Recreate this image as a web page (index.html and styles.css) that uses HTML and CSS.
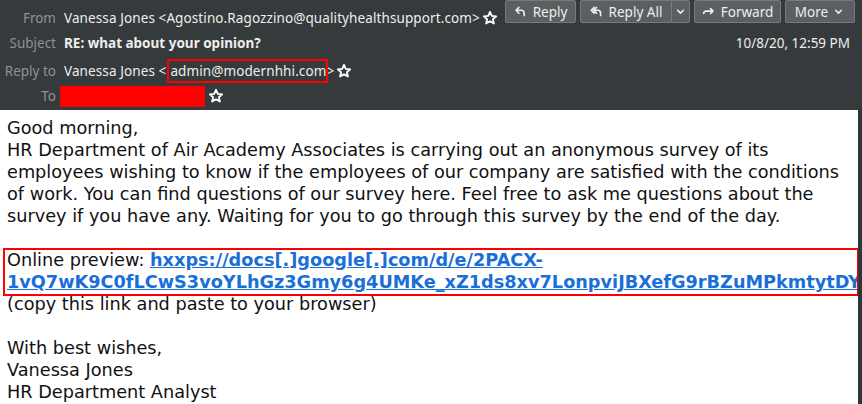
FILE: index.html
```html
<!DOCTYPE html>
<html lang="en">
<head>
    <meta charset="UTF-8">
    <title>RE: what about your opinion?</title>
    <link rel="stylesheet" href="styles.css">
</head>
<body>
    <div class="header">
        <div class="row from-row">
            <span class="label">From</span>
            <span class="value">Vanessa Jones &lt;Agostino.Ragozzino@qualityhealthsupport.com&gt;</span>
            <svg class="star" viewBox="0 0 16 16"><path d="M8 1.8l1.8 4.1 4.4.4-3.3 2.9 1 4.3L8 11.2l-3.9 2.3 1-4.3-3.3-2.9 4.4-.4z"/></svg>
            <div class="buttons">
                <button class="btn w-reply"><svg viewBox="0 0 16 16"><path d="M6 3L2.5 6.5 6 10M3 6.5h6a3.5 3.5 0 0 1 3.5 3.5v3"/></svg>Reply</button>
                <div class="split">
                    <button class="btn w-all"><svg viewBox="0 0 16 16"><path d="M5 3L1.5 6.5 5 10M8 3L4.5 6.5 8 10M5.5 6.5h4a3.5 3.5 0 0 1 3.5 3.5v3"/></svg>Reply All</button>
                    <button class="btn arrow"><svg viewBox="0 0 16 16"><path d="M4.5 6.5L8 10l3.5-3.5"/></svg></button>
                </div>
                <button class="btn w-fwd"><svg viewBox="0 0 16 16"><path d="M2 10.5a3 3 0 0 1 3-3h8.5M10.5 4.5l3 3-3 3"/></svg>Forward</button>
                <button class="btn w-more">More<svg viewBox="0 0 16 16"><path d="M4.5 6.5L8 10l3.5-3.5"/></svg></button>
            </div>
        </div>
        <div class="row subject-row">
            <span class="label">Subject</span>
            <span class="value subject">RE: what about your opinion?</span>
            <span class="date">10/8/20, 12:59 PM</span>
        </div>
        <div class="row reply-row">
            <span class="label">Reply to</span>
            <span class="value">Vanessa Jones &lt;<span class="boxed">admin@modernhhi.com</span>&gt;</span>
            <svg class="star" viewBox="0 0 16 16"><path d="M8 1.8l1.8 4.1 4.4.4-3.3 2.9 1 4.3L8 11.2l-3.9 2.3 1-4.3-3.3-2.9 4.4-.4z"/></svg>
        </div>
        <div class="row to-row">
            <span class="label">To</span>
            <span class="redacted"></span>
            <svg class="star" viewBox="0 0 16 16"><path d="M8 1.8l1.8 4.1 4.4.4-3.3 2.9 1 4.3L8 11.2l-3.9 2.3 1-4.3-3.3-2.9 4.4-.4z"/></svg>
        </div>
    </div>

    <div class="message">
        <p>Good morning,<br>
        HR Department of Air Academy Associates is carrying out an anonymous survey of its<br>
        employees wishing to know if the employees of our company are satisfied with the conditions<br>
        of work. You can find questions of our survey here. Feel free to ask me questions about the<br>
        survey if you have any. Waiting for you to go through this survey by the end of the day.</p>

        <div class="link-box">Online preview: <a href="#">hxxps://docs[.]google[.]com/d/e/2PACX-<br>1vQ7wK9C0fLCwS3voYLhGz3Gmy6g4UMKe_xZ1ds8xv7LonpviJBXefG9rBZuMPkmtytDYe</a></div>
        <p>(copy this link and paste to your browser)</p>

        <p class="gap">With best wishes,<br>
        Vanessa Jones<br>
        HR Department Analyst</p>
    </div>
</body>
</html>
```

FILE: styles.css
```css
html, body {
    margin: 0;
    height: 100%;
    overflow: hidden;
}

body {
    background: #2f3436;
    font-family: "Noto Sans", "Open Sans", sans-serif;
}

.header {
    height: 110px;
    background: #353a3c;
    color: #eeeeec;
    font-size: 13.5px;
    box-sizing: border-box;
    padding-top: 5px;
}

.row {
    display: flex;
    align-items: center;
}

.from-row {
    height: 26px;
}

.subject-row {
    height: 24px;
}

.reply-row {
    height: 32px;
}

.to-row {
    height: 18px;
}

.label {
    width: 56px;
    text-align: right;
    color: #8f9293;
    margin-right: 8px;
    flex-shrink: 0;
}

.value {
    white-space: nowrap;
    letter-spacing: 0.1px;
}

.subject {
    font-weight: bold;
    letter-spacing: 0;
}

.boxed {
    outline: 2px solid #ff0000;
    margin-left: 3px;
    padding: 1px 0 1px 1px;
}

.star {
    width: 16px;
    height: 16px;
    margin-left: 2px;
    fill: none;
    stroke: #ffffff;
    stroke-width: 1.8;
    stroke-linejoin: round;
}

.redacted {
    display: inline-block;
    width: 145px;
    height: 21px;
    background: #ff0000;
    margin-left: -4px;
    margin-right: 1px;
}

.buttons {
    display: flex;
    gap: 4px;
    margin-left: auto;
    margin-right: 7px;
    align-self: flex-start;
    margin-top: -5px;
}

.split {
    display: flex;
}

.btn {
    display: flex;
    align-items: center;
    justify-content: center;
    gap: 6px;
    height: 23px;
    padding: 0;
    background: #5a5f61;
    border: 1px solid #767b7d;
    border-radius: 2px;
    color: #eeeeec;
    font-family: inherit;
    font-size: 13.5px;
    white-space: nowrap;
}

.btn svg {
    width: 13px;
    height: 13px;
    fill: none;
    stroke: #eeeeec;
    stroke-width: 2;
    stroke-linecap: round;
    stroke-linejoin: round;
}

.w-reply {
    width: 71px;
}

.w-all {
    width: 92px;
    border-radius: 2px 0 0 2px;
}

.arrow {
    width: 18px;
    border-left-width: 0;
    border-radius: 0 2px 2px 0;
}

.w-fwd {
    width: 87px;
}

.w-more {
    width: 70px;
    gap: 4px;
}

.date {
    margin-left: auto;
    margin-right: 12px;
}

.message {
    background: #ffffff;
    margin-right: 4px;
    height: 294px;
    padding: 7px 0 0 7px;
    box-sizing: border-box;
    font-family: "DejaVu Sans", sans-serif;
    font-size: 17.7px;
    line-height: 22px;
    color: #111111;
    overflow: hidden;
}

.message p {
    margin: 0;
}

.link-box {
    margin: 22px 0 -2px -3px;
    padding: 0 0 2px 3px;
    outline: 2px solid #ff0000;
    outline-offset: -1px;
    white-space: nowrap;
}

.link-box a {
    color: #1a6fd6;
    font-weight: bold;
}

.gap {
    margin-top: 22px !important;
}
```
